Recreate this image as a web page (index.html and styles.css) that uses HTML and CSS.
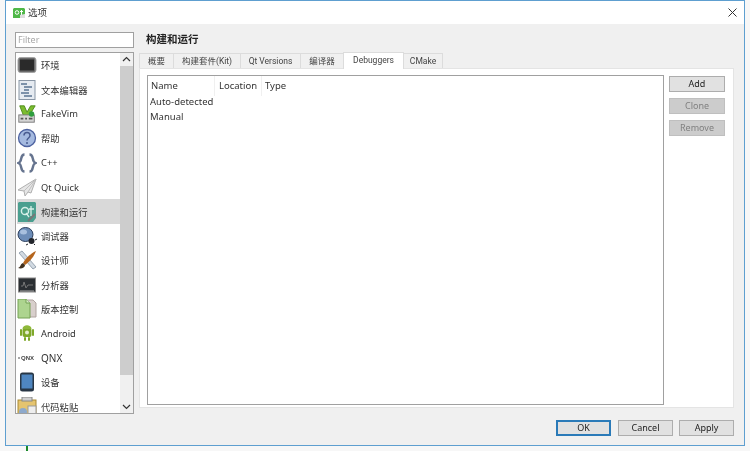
FILE: index.html
```html
<!DOCTYPE html>
<html lang="zh">
<head>
<meta charset="utf-8">
<title>选项</title>
<link rel="stylesheet" href="styles.css">
</head>
<body>
<div class="window">
  <header class="titlebar">
    <svg class="app-icon" width="12" height="10" viewBox="0 0 12 10"><path d="M1 0h10l1 1v5l-2 4H0V1z" fill="#4fb848"/><circle cx="4" cy="4.500" r="1.800" fill="none" stroke="#fff" stroke-width="1"/><path d="M8.500 2v5M7 3.500h3" stroke="#fff" stroke-width="1"/><path d="M7 7l5-1v4H7z" fill="#ddd"/></svg>
    <span class="title">选项</span>
    <svg class="close" width="9" height="9" viewBox="0 0 9 9"><path d="M0.500 0.500l8 8M8.500 0.500l-8 8" stroke="#333" stroke-width="1"/></svg>
  </header>
  <div class="content">
    <div class="main">
      <aside class="side">
        <div class="filter">Filter</div>
        <div class="list">
          <div class="items">
            <div class="item"><svg class="ico" viewBox="0 0 20 20"><rect x="1" y="2.500" width="18" height="15" rx="2.500" fill="#6b6b6b" stroke="#a5a5a5"/><rect x="3" y="4.500" width="14" height="11" fill="#2a2a2a"/></svg><span>环境</span></div>
            <div class="item"><svg class="ico" viewBox="0 0 20 20"><rect x="2" y="0.500" width="16" height="19" fill="#e6ebf1" stroke="#8a97a6"/><path d="M4 4h6M7 7h8M7 10h5M4 13h8M7 16h8" stroke="#5b7593" stroke-width="1.400"/></svg><span>文本编辑器</span></div>
            <div class="item"><svg class="ico" viewBox="0 0 22 20"><path d="M3 1h5l3 7 4-7h5L12 14H8z" fill="#7cbc30" stroke="#4c8a18"/><rect x="2" y="11" width="17" height="8" fill="#d5d5d5" stroke="#777"/><path d="M4 15h3M9 15h2M13 15h4" stroke="#555" stroke-width="2"/><circle cx="16" cy="10" r="3" fill="#2f9e3f"/></svg><span>FakeVim</span></div>
            <div class="item"><svg class="ico" viewBox="0 0 20 20"><circle cx="10" cy="10" r="8.500" fill="#a5bae0" stroke="#4d62a0" stroke-width="1.300"/><path d="M7 7.500c0-4 6-4 6 0 0 2.500-3 2.500-3 5" fill="none" stroke="#4a5c90" stroke-width="1.500"/><circle cx="10" cy="15" r="1" fill="#4a5c90"/></svg><span>帮助</span></div>
            <div class="item"><svg class="ico" viewBox="0 0 20 20"><path d="M7.500 1.500C2.500 1.500 6 8 1.500 10c4.500 2 1 8.500 6 8.500M12.500 1.500c5 0 1.500 6.500 6 8.500-4.500 2-1 8.500-6 8.500" fill="none" stroke="#66748f" stroke-width="2.400"/></svg><span>C++</span></div>
            <div class="item"><svg class="ico" viewBox="0 0 20 20"><path d="M19 2L1 13l6 1 1 5 3-4 3 1z" fill="#e6e6e6" stroke="#b0b0b0"/><path d="M19 2L7 14M19 2l-8 13" stroke="#c0c0c0" fill="none"/></svg><span>Qt Quick</span></div>
            <div class="item selected"><svg class="ico" viewBox="0 0 20 20"><path d="M2 0h16l1 1v15l-3 4H1V1z" fill="#4a9f8f"/><circle cx="8" cy="9" r="3.600" fill="none" stroke="#d8f0e8" stroke-width="1.500"/><path d="M14 4v10M12 7h5" stroke="#d8f0e8" stroke-width="1.300"/><path d="M9 11l3 4" stroke="#d8f0e8" stroke-width="1.300"/><path d="M11 19l7-7" stroke="#777" stroke-width="2"/></svg><span>构建和运行</span></div>
            <div class="item"><svg class="ico" viewBox="0 0 20 20"><ellipse cx="8.500" cy="8.500" rx="7.500" ry="7" fill="#6d8db8" stroke="#2d3f5c"/><ellipse cx="6.500" cy="6" rx="3.500" ry="2.500" fill="#a9c0de"/><circle cx="14.500" cy="15" r="3" fill="#23262c"/><path d="M11 18l-2 1M18 14l2-1M17 18l1 1" stroke="#23262c"/></svg><span>调试器</span></div>
            <div class="item"><svg class="ico" viewBox="0 0 20 20"><path d="M2 3l3-2 14 16-3 2z" fill="#d2dae2" stroke="#97a4b1"/><path d="M19 1C14 3 8 9 6 13l2 2C12 12 17 7 19 1z" fill="#b5651d"/><path d="M6 13c-3 1-2 4-5 5 3 1 7 0 7-3z" fill="#40301f"/></svg><span>设计师</span></div>
            <div class="item"><svg class="ico" viewBox="0 0 20 20"><rect x="1.500" y="3" width="17" height="14" fill="#2b2f33" stroke="#888"/><path d="M4 11h2l1-4 2 6 2-3h5" stroke="#777" fill="none"/><path d="M3 16h14" stroke="#aaa"/></svg><span>分析器</span></div>
            <div class="item"><svg class="ico" viewBox="0 0 20 20"><path d="M9 1h7l3 3v14h-6z" fill="#d8cfcc" stroke="#b0a3a0"/><path d="M1 0h8l4 4v15H1z" fill="#add48f" stroke="#74a255"/><path d="M9 0v4h4" fill="#d6eac7" stroke="#74a255"/></svg><span>版本控制</span></div>
            <div class="item"><svg class="ico" viewBox="0 0 20 20"><rect x="5.500" y="5" width="9" height="9" rx="2" fill="#7fa82b"/><path d="M5.500 6c0-5 9-5 9 0z" fill="#8fb93a"/><rect x="3" y="6" width="2" height="7" rx="1" fill="#7fa82b"/><rect x="15" y="6" width="2" height="7" rx="1" fill="#7fa82b"/><rect x="7" y="14" width="2" height="4" rx="1" fill="#7fa82b"/><rect x="11" y="14" width="2" height="4" rx="1" fill="#7fa82b"/><circle cx="10" cy="9.500" r="2" fill="#e6eecd"/></svg><span>Android</span></div>
            <div class="item"><svg class="ico" viewBox="0 0 20 20"><circle cx="2" cy="10" r="1" fill="#888"/><text class="qnx-logo" x="4" y="12">QNX</text></svg><span class="latin-big">QNX</span></div>
            <div class="item"><svg class="ico" viewBox="0 0 20 20"><rect x="3" y="0.500" width="14" height="19" rx="2.500" fill="#283645"/><rect x="4.500" y="2.500" width="11" height="14" fill="#4f86c0"/></svg><span>设备</span></div>
            <div class="item"><svg class="ico" viewBox="0 0 20 20"><rect x="1" y="3" width="18" height="16" fill="#e5c46f" stroke="#a98a35"/><rect x="5" y="0" width="10" height="4" fill="#cfcfcf" stroke="#888"/><circle cx="6" cy="15" r="4" fill="#8da9cc"/><rect x="11" y="9" width="8" height="10" fill="#eee" stroke="#999"/></svg><span>代码粘贴</span></div>
          </div>
          <div class="scrollbar">
            <svg class="arrow" width="13" height="13" viewBox="0 0 13 13"><path d="M3 8l3.500-3.500L10 8" fill="none" stroke="#333" stroke-width="1.200"/></svg>
            <div class="thumb"></div>
            <svg class="arrow arrow-down" width="13" height="13" viewBox="0 0 13 13"><path d="M3 5l3.500 3.500L10 5" fill="none" stroke="#333" stroke-width="1.200"/></svg>
          </div>
        </div>
      </aside>
      <section class="panel">
        <h1 class="heading">构建和运行</h1>
        <nav class="tabs">
          <div class="tab t1">概要</div>
          <div class="tab t2">构建套件(Kit)</div>
          <div class="tab t3">Qt Versions</div>
          <div class="tab t4">编译器</div>
          <div class="tab t5 active">Debuggers</div>
          <div class="tab t6">CMake</div>
        </nav>
        <div class="pane">
          <div class="tree">
            <div class="thead">
              <div class="th c1">Name</div>
              <div class="th c2">Location</div>
              <div class="th c3">Type</div>
            </div>
            <div class="row">Auto-detected</div>
            <div class="row">Manual</div>
          </div>
          <div class="side-buttons">
            <div class="btn">Add</div>
            <div class="btn off">Clone</div>
            <div class="btn off">Remove</div>
          </div>
        </div>
      </section>
    </div>
    <footer class="footer">
      <div class="btn wide default">OK</div>
      <div class="btn wide">Cancel</div>
      <div class="btn wide">Apply</div>
    </footer>
  </div>
</div>
<div class="stray"></div>
</body>
</html>
```
FILE: styles.css
```css
* { box-sizing: border-box; }
html, body { margin: 0; padding: 0; }
body {
  width: 750px;
  height: 451px;
  background: #f7f7f7;
  overflow: hidden;
  padding: 0 5px 0 5px;
  font-family: "Noto Sans", "Noto Sans CJK SC", sans-serif;
  font-size: 10px;
  color: #333;
}
.window {
  width: 740px;
  height: 446px;
  border: 1px solid #5e9fd0;
  background: #f0f0f0;
  display: flex;
  flex-direction: column;
  filter: blur(0.3px);
}
.titlebar {
  height: 23px;
  flex: none;
  background: #fff;
  display: flex;
  align-items: center;
  padding: 0 7px 0 7px;
}
.title { margin-left: 3px; font-size: 9.500px; line-height: 20px; color: #333; }
.close { margin-left: auto; }
.content {
  flex: 1;
  display: flex;
  flex-direction: column;
  padding: 8px 9px 8px 9px;
}
.main { display: flex; height: 382px; }
.side { width: 119px; flex: none; display: flex; flex-direction: column; gap: 4px; }
.filter {
  height: 16px;
  background: #fff;
  border: 1px solid #a0a0a0;
  color: #a8a8a8;
  font-size: 9px;
  line-height: 14px;
  padding-left: 2px;
}
.list {
  height: 362px;
  display: flex;
  background: #fff;
  border: 1px solid #a0a0a0;
  overflow: hidden;
}
.items { width: 104px; flex: none; padding-left: 1px; overflow: hidden; }
.item {
  height: 24.400px;
  display: flex;
  align-items: center;
  gap: 4px;
  white-space: nowrap;
  font-size: 9.300px;
  color: #333;
}
.item.selected { background: #d9d9d9; }
.ico { width: 20px; height: 20px; flex: none; }
.qnx-logo { font-family: "Liberation Sans", sans-serif; font-size: 6px; font-weight: 700; fill: #444; }
.latin-big { font-size: 10px; }
.scrollbar {
  flex: 1;
  background: #f0f0f0;
  display: flex;
  flex-direction: column;
}
.arrow { flex: none; }
.arrow-down { margin-top: auto; }
.thumb { height: 309px; background: #cdcdcd; }
.panel { flex: 1; min-width: 0; padding-left: 5px; display: flex; flex-direction: column; }
.heading {
  margin: 0;
  height: 20px;
  padding-left: 7px;
  font-size: 10.500px;
  line-height: 15px;
  font-weight: 700;
  color: #222;
}
.tabs { display: flex; height: 16px; align-items: flex-end; flex: none; }
.tab {
  height: 15px;
  background: #f0f0f0;
  border: 1px solid #dcdcdc;
  border-bottom: 0;
  margin-right: -1px;
  text-align: center;
  line-height: 14px;
  font-family: Roboto, "Noto Sans CJK SC", sans-serif;
  font-size: 8.500px;
  color: #444;
}
.tab.active { height: 17px; background: #fff; position: relative; z-index: 1; margin-bottom: -1px; line-height: 15px; }
.t1 { width: 35px; }
.t2 { width: 68px; }
.t3 { width: 61px; }
.t4 { width: 44px; }
.t5 { width: 61px; }
.t6 { width: 40px; }
.pane {
  width: 595px;
  height: 340px;
  background: #fff;
  border: 1px solid #e4e4e4;
  padding: 6px 8px 2px 7px;
  display: flex;
  gap: 5px;
}
.tree {
  width: 517px;
  height: 330px;
  border: 1px solid #a0a0a0;
  background: #fff;
  padding-left: 2px;
  flex: none;
}
.thead { display: flex; height: 19px; }
.th {
  height: 20px;
  line-height: 19px;
  padding-left: 1px;
  font-size: 9.500px;
  color: #333;
  border-right: 1px solid #f0f0f0;
}
.c1 { width: 65px; }
.c2 { width: 47px; padding-left: 4px; }
.c3 { flex: 1; padding-left: 3px; border-right: 0; }
.row { height: 14.500px; line-height: 14.500px; font-size: 9.500px; color: #333; }
.side-buttons { display: flex; flex-direction: column; gap: 6px; width: 56px; flex: none; padding-top: 1px; }
.btn {
  height: 16px;
  background: #e1e1e1;
  border: 1px solid #adadad;
  text-align: center;
  line-height: 14px;
  font-size: 9px;
  color: #222;
  flex: none;
}
.btn.off { background: #cccccc; border-color: #bfbfbf; color: #808080; }
.footer { display: flex; justify-content: flex-end; gap: 6px; padding-top: 6px; padding-right: 1px; }
.wide { width: 55px; }
.default { border: 2px solid #2a7ab8; line-height: 12px; margin-right: 1px; }
.stray { width: 2px; height: 6px; margin-left: 21px; background: #1a8a2a; }
```
